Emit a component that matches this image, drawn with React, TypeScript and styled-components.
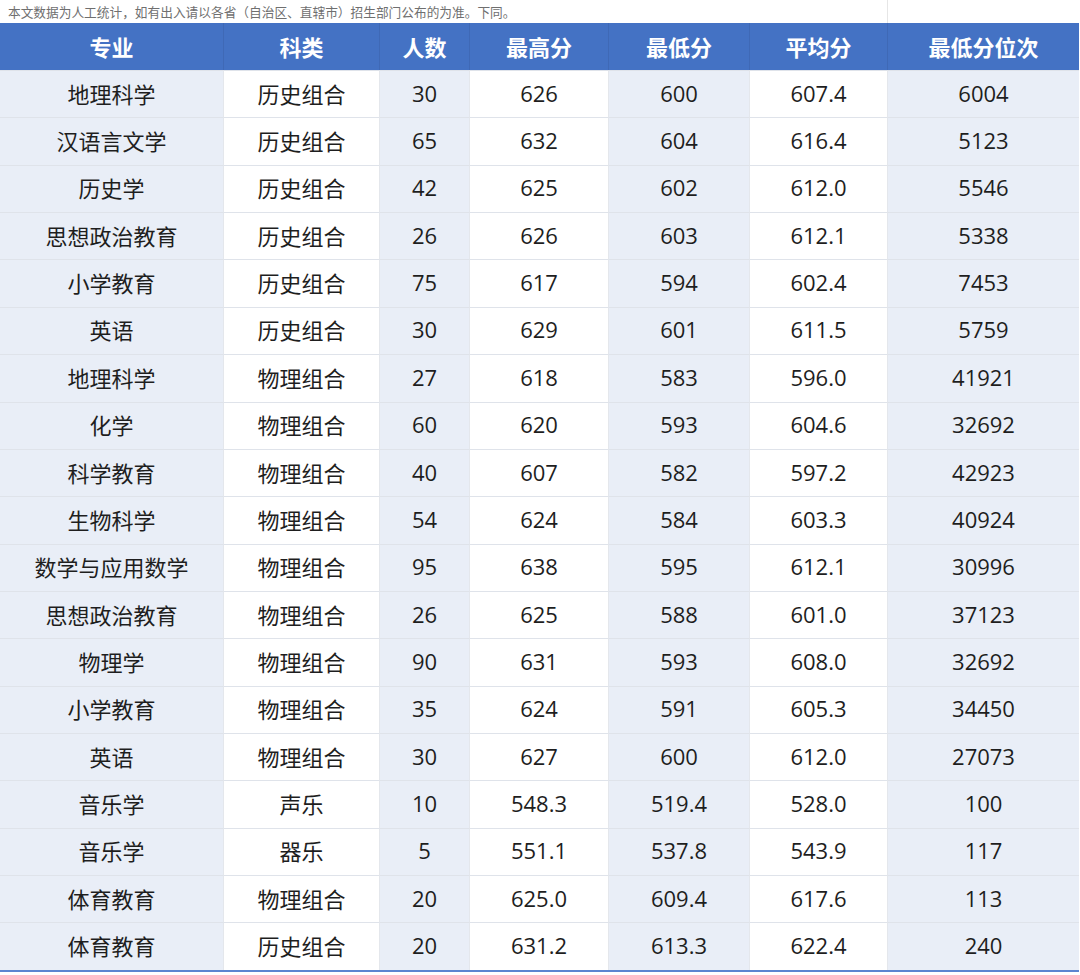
import styled, { createGlobalStyle } from "styled-components";

const GlobalStyle = createGlobalStyle`
  html, body {
    margin: 0;
    padding: 0;
    background: #fff;
  }
  body {
    font-family: "Open Sans", "Noto Sans CJK SC", sans-serif;
  }
`;

const COLS = "223px 156px 90px 139px 141px 138px 192px";

const Page = styled.div`
  width: 1080px;
  height: 975px;
  background: #fff;
`;

const Caption = styled.div`
  display: grid;
  grid-template-columns: 887px 192px;
  height: 23px;
`;

const CaptionCell = styled.div<{ $line?: boolean }>`
  display: flex;
  align-items: center;
  padding-left: 8px;
  font-family: "Noto Sans CJK SC", sans-serif;
  font-size: 12.7px;
  color: #6f6f6f;
  white-space: nowrap;
  border-left: ${(p) => (p.$line ? "1px solid #e6e6e6" : "none")};
`;

const Table = styled.div`
  display: grid;
  grid-template-columns: ${COLS};
  grid-template-rows: 47px repeat(19, 47.37px);
  width: 1079px;
  border-bottom: 2px solid #5b85d0;
`;

const HeadCell = styled.div`
  display: flex;
  align-items: center;
  justify-content: center;
  padding-bottom: 2px;
  background: #4472c4;
  color: #fff;
  font-family: "Noto Sans CJK SC", sans-serif;
  font-weight: 700;
  font-size: 22px;
  border-left: 1px solid #3f69b6;
  &:first-child {
    border-left: none;
  }
`;

const Cell = styled.div<{ $tint: boolean }>`
  display: flex;
  align-items: center;
  justify-content: center;
  padding-bottom: 3px;
  background: ${(p) => (p.$tint ? "#e9eef7" : "#fff")};
  color: #1e1e1e;
  font-size: 22px;
  border-left: 1px solid #e4e7ec;
  border-top: 1px solid #dfe3ea;
  box-sizing: border-box;
  &:nth-child(7n + 1) {
    border-left: none;
  }
`;

const headers = ["专业", "科类", "人数", "最高分", "最低分", "平均分", "最低分位次"];

const rows: string[][] = [
  ["地理科学", "历史组合", "30", "626", "600", "607.4", "6004"],
  ["汉语言文学", "历史组合", "65", "632", "604", "616.4", "5123"],
  ["历史学", "历史组合", "42", "625", "602", "612.0", "5546"],
  ["思想政治教育", "历史组合", "26", "626", "603", "612.1", "5338"],
  ["小学教育", "历史组合", "75", "617", "594", "602.4", "7453"],
  ["英语", "历史组合", "30", "629", "601", "611.5", "5759"],
  ["地理科学", "物理组合", "27", "618", "583", "596.0", "41921"],
  ["化学", "物理组合", "60", "620", "593", "604.6", "32692"],
  ["科学教育", "物理组合", "40", "607", "582", "597.2", "42923"],
  ["生物科学", "物理组合", "54", "624", "584", "603.3", "40924"],
  ["数学与应用数学", "物理组合", "95", "638", "595", "612.1", "30996"],
  ["思想政治教育", "物理组合", "26", "625", "588", "601.0", "37123"],
  ["物理学", "物理组合", "90", "631", "593", "608.0", "32692"],
  ["小学教育", "物理组合", "35", "624", "591", "605.3", "34450"],
  ["英语", "物理组合", "30", "627", "600", "612.0", "27073"],
  ["音乐学", "声乐", "10", "548.3", "519.4", "528.0", "100"],
  ["音乐学", "器乐", "5", "551.1", "537.8", "543.9", "117"],
  ["体育教育", "物理组合", "20", "625.0", "609.4", "617.6", "113"],
  ["体育教育", "历史组合", "20", "631.2", "613.3", "622.4", "240"],
];

export default function App() {
  return (
    <Page>
      <GlobalStyle />
      <Caption>
        <CaptionCell>
          本文数据为人工统计，如有出入请以各省（自治区、直辖市）招生部门公布的为准。下同。
        </CaptionCell>
        <CaptionCell $line />
      </Caption>
      <Table>
        {headers.map((h) => (
          <HeadCell key={h}>{h}</HeadCell>
        ))}
        {rows.map((r, ri) =>
          r.map((v, ci) => (
            <Cell key={`${ri}-${ci}`} $tint={ci % 2 === 0}>
              {v}
            </Cell>
          ))
        )}
      </Table>
    </Page>
  );
}
